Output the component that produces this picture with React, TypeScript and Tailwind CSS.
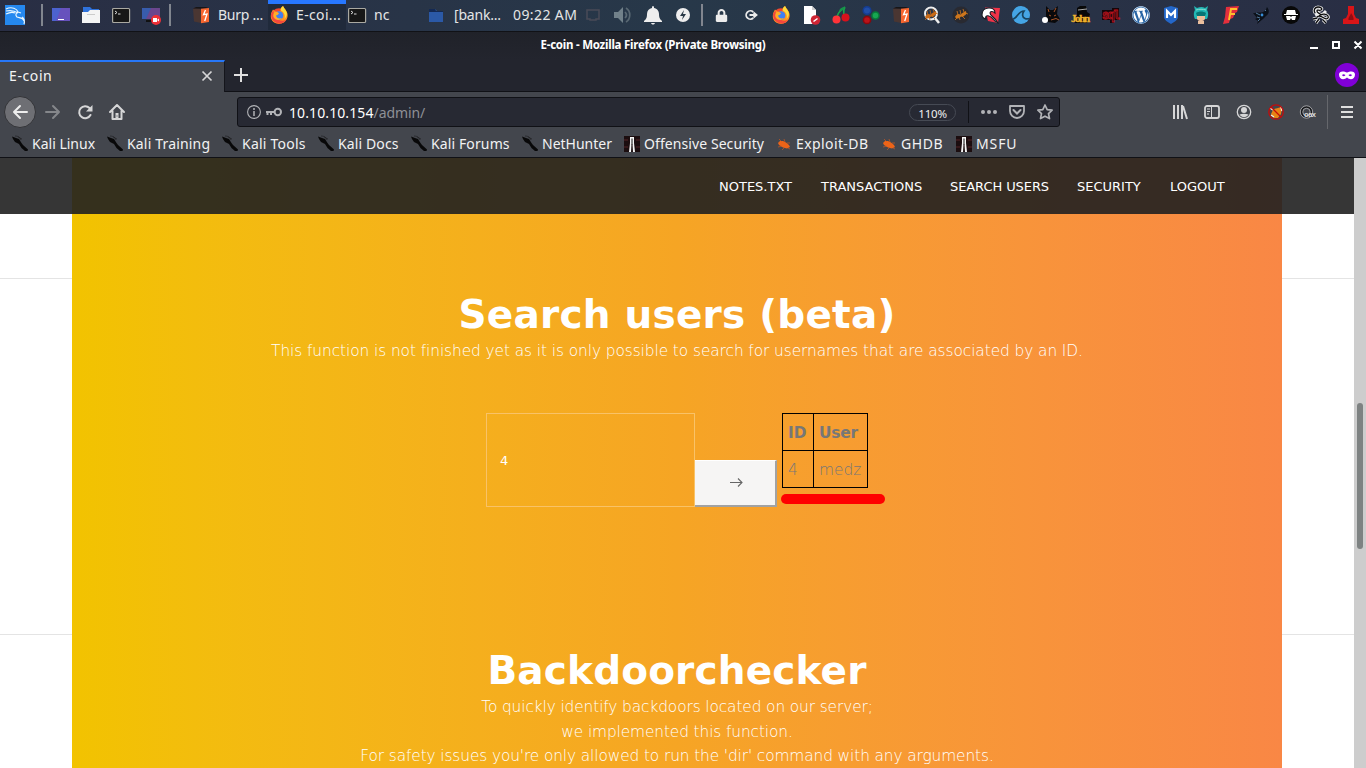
import React from "react";
import { FaWordpress, FaLock } from "react-icons/fa";

type P = { children?: React.ReactNode; s?: number; v?: string };
const Svg = ({ children, s = 18, v = "0 0 18 18" }: P) => (
  <svg width={s} height={s} viewBox={v} fill="none" className="shrink-0 overflow-visible">{children}</svg>
);

const Firefox = ({ s = 18 }: { s?: number }) => (
  <Svg s={s}>
    <circle cx="9" cy="10" r="7.8" fill="#f5482f" />
    <path d="M3 3.500C.2 8-.2 12.500 3.500 16c3 2.300 8 2.200 11 0 3.500-3 4.200-8 1.500-11.500C15.800 3 14 2.500 13 0c-2 1.300-3 3-2.500 5L6 6Z" fill="#ff9420" />
    <path d="M13 0c-2 1.500-2.500 3-2 4.500 3 2 4.500 4.500 3.500 8.500 4-4 2-8 .8-9C15 3 14 2 13 0Z" fill="#ffdc3a" />
    <path d="M1 8c0 6 4 9.500 8.500 9.500 3 0 6-2 7-4-2.500 1.500-5 1.500-7.500.5L4 10 3.500 4Z" fill="#f4473d" />
    <circle cx="9" cy="9.500" r="4.300" fill="#3f7ff2" />
    <path d="M5 6c1.500-.5 3 0 4 1.500L7.500 9 6 9.500C6.500 12 9 13 12 12c-2 3-7 2.300-8.500-1C2.800 9.500 3.500 7 5 6Z" fill="#ffad29" />
  </Svg>
);
const Burp = () => (
  <Svg>
    <path d="M1 3 4 1h9l3 1.500H9V17l-7-1.500Z" fill="#4a3632" />
    <path d="M1 2.500 4 1h10l3 1.300-8 .5Z" fill="#171518" />
    <path d="M9 2.800 17 2v14l-8 1.200Z" fill="#f7662f" />
    <path d="m13.500 4-2 4.700 3.500-.7-2.300 7" stroke="#fff" strokeWidth="1.300" />
  </Svg>
);
const Terminal = () => (
  <Svg>
    <rect x=".6" y="2.500" width="17" height="14" rx="1" fill="#171717" stroke="#aaa9a2" strokeWidth="1.200" />
    <path d="m3 5 2 1.500-2 1.500M6 8h2.500" stroke="#ddd" />
  </Svg>
);
const Ant = ({ c = "#cf771c" }: { c?: string }) => (
  <>
    <path d="M3 11c1.500-3 4-4 5.500-2 1-2 3.500-2.500 5-4 1.500 1 1 4-1 4.500-1 1.500-2.500 1.500-3.500 1-1.500 2-4 3-6 .5Z" fill={c} />
    <path d="m5 12-2 2m4-3 1 3m2-4 3 3M6 9 5 5m4 4-1-5m4 2-1-3m2 4 3 1" stroke={c} strokeWidth=".8" />
  </>
);

const tray: React.ReactNode[] = [
  <FaLock size={13} color="#ececec" />,
  <Svg><path d="M11.300 6A4.200 4.200 0 1 0 11.300 12M7.500 9H14m-2.500-2.500L14.500 9 11.500 11.500" stroke="#ececec" strokeWidth="1.800" /></Svg>,
  <Firefox />,
  <Svg><path d="M2 0h8l4 4v14H2Z" fill="#fff" /><path d="M10 0v4h4" fill="#cfcfcf" /><circle cx="13.500" cy="14" r="4.800" fill="#cf2534" /><path d="m11.500 15.500 4-3" stroke="#fff" strokeWidth="1.500" /></Svg>,
  <Svg><path d="M5 11C6 6 9 4 13 1M13 1c-2.500 4-1 6-1 9" stroke="#18a34b" strokeWidth="1.600" /><path d="M7 5c1-3 3-4 6-4-1 3-3 4-6 4Z" fill="#17934a" /><circle cx="4.500" cy="13.500" r="4" fill="#ff3338" /><circle cx="13.500" cy="11.500" r="4" fill="#d8111c" /></Svg>,
  <Svg><circle cx="5" cy="4.500" r="3.800" fill="#214ea7" stroke="#153d91" strokeWidth="1.500" /><circle cx="13.500" cy="9.500" r="3.500" fill="#18a652" stroke="#087b3a" strokeWidth="1.500" /><circle cx="5" cy="14" r="3.600" fill="#bb1319" stroke="#89080e" strokeWidth="1.500" /></Svg>,
  <Burp />,
  <Svg><circle cx="9" cy="7.500" r="6" stroke="#eee" strokeWidth="2" /><path d="m13 12 4 5" stroke="#eee" strokeWidth="2.500" /><Ant c="#c96a15" /></Svg>,
  <Svg><circle cx="9" cy="9" r="8.500" fill="#292a31" /><Ant /></Svg>,
  <Svg><path d="M3 1.500 18 2l-2 15-10-2Z" fill="#ef3348" /><path d="M0 9C0 4 3 2 7 2c4 0 6 2 6 5-2-2-5-2-5 0 0 3 5 4 8 10-4-1-5-6-9-7-3-1-4 1-3 3-2 0-4-2-4-4Z" fill="#fff" stroke="#181a22" strokeWidth="1.100" /></Svg>,
  <Svg><circle cx="9" cy="9" r="9" fill="#45a5e5" /><path d="M1 13c4 0 5-8 11-8-2 3-2 6 1 7.500 1 .5 3 .5 4.500 0" stroke="#18445f" strokeWidth="1.700" /></Svg>,
  <Svg><path d="m4 0 4 4h3l5-4-1 8 3 5-5 4-7-1-2-6Z" fill="#09090b" /><circle cx="3" cy="14" r="3" fill="#fff" /><path d="m6 3 1 3m7-4-2 4M7 9l2 1m3 0 2-1M9 14l5-1.500 3 1.500" stroke="#a95428" /></Svg>,
  <Svg s={20} v="-1 0 20 18"><path d="M5 2 8 0h6l1 6 3 2-3 9H3l2-9Z" fill="#080808" /><path d="m6 4 9-1" stroke="#a9a9a9" /><text x="-1" y="16" fontFamily="Liberation Serif" fontWeight="bold" fontSize="11" fill="#f1b42c" stroke="#f1b42c" strokeWidth=".3" textLength="19">John</text></Svg>,
  <Svg><path d="M0 4h10V2h7v12h-5v3H8v-3H0Z" fill="#150609" /><text x="0" y="13" fontFamily="Liberation Mono" fontWeight="bold" fontSize="12" fill="#171014" stroke="#bd101b" strokeWidth=".8" textLength="18">sql</text></Svg>,
  <span className="grid h-[18px] w-[18px] place-items-center rounded-full bg-[#2865a5]"><FaWordpress size={18} color="#fff" /></span>,
  <Svg><path d="m9 0 7 2v9c0 3-4 5-7 7-3-2-7-4-7-7V2Z" fill="#2467c9" /><path d="M5 12V5l4 4 4-4v7" stroke="#fff" strokeWidth="2.200" /></Svg>,
  <Svg><path d="M2 0 5 2c3-1.500 6-1.500 8 0l3-2-1 4c2 3 1 7 0 9H3C2 11 1 7 3 4Z" fill="#23b6b3" /><path d="M5 8h8v5c-2 3-6 3-8 0Z" fill="#edbd9a" /><path d="M4 7c3-2 7-2 10 0l-1 3H5Z" fill="#087574" /><path d="M6 15h6v3H6Z" fill="#ebc09e" /><path d="M4 4c3-1 7-1 10 0" stroke="#86ded2" /></Svg>,
  <Svg><path d="M4 1 17 0l-2 6-2 1-2 5-3 1-1 4-6 1 2-7Z" fill="#e42f3c" /><path d="M7 14 9 3h6M8 8h5" stroke="#ffc12e" strokeWidth="2" /></Svg>,
  <Svg><path d="M3 7c3-1 6 0 8-1 3-1 3-3 4-5 3 4 2 7-1 9l-3 3-6 5 1-3-3-2 2-1-4-5Z" fill="#0c1119" /><path d="m4 7 4 2m-3 2 3 1m5-7 1-1M6 15l2-2" stroke="#5f93bd" strokeWidth=".8" /><circle cx="10" cy="9" r="1.400" fill="#388dd6" /></Svg>,
  <Svg><circle cx="9" cy="9" r="9" fill="#080808" /><path d="M5 4h8l1 4H4ZM2 8h14v1H2ZM4 10h4l1 1 1-1h4l-1 4h-3l-1-2-1 2H5Z" fill="#fff" /></Svg>,
  <Svg><path d="M3 7C1 4 3 1 6 1s5 2 3 3-4-1-4 1 3 3 5 4M7 10c3-3 8-2 9 0s-1 4-4 2-5-3-7-1M5 12l-4 1m6 0-3 4m7-3 3 3M7 7 3 9m8-1 3-3" stroke="#eee" strokeWidth="3" /><path d="M3 7C1 4 3 1 6 1s5 2 3 3-4-1-4 1 3 3 5 4M7 10c3-3 8-2 9 0s-1 4-4 2-5-3-7-1M5 12l-4 1m6 0-3 4m7-3 3 3" stroke="#0c0c0d" strokeWidth="1.300" /></Svg>,
  <Svg><path d="M6 0h6v8l2 4 3 1v5H1v-5l3-1 2-4Z" fill="#d91518" /><path d="M6.500 14C6 11 9 9 9 7c2 3 3 5 2.500 7Z" fill="#8d0d13" /></Svg>,
];

const Divider = () => <div className="h-[22px] w-0.5 bg-[#81868f]" />;
const Cell = ({ children, className = "" }: { children: React.ReactNode; className?: string }) => (
  <div className={"flex w-[30px] shrink-0 items-center justify-center " + className}>{children}</div>
);

function Taskbar() {
  return (
    <header className="flex h-[31px] shrink-0 items-center bg-linear-to-r from-[#292e44] via-[#273849] to-[#292e44] pb-px text-[14px] whitespace-nowrap text-[#e4e5e6]">
      <Cell>
        <Svg s={20} v="0 0 20 20"><path d="M0 0h20v20H0Z" fill="#2588f0" /><path d="M1 4c6-3 11 0 12 3-2 1-3 3-1 5 2 1 6 0 7 4m-6-9 3 1M1 6c5-1 9 0 12 2M1 9c4-2 7-2 9-1M17 12c2 1 3 4 2 7" stroke="#e9f6ff" strokeWidth="1.200" /></Svg>
      </Cell>
      <div className="ml-[11px]"><Divider /></div>
      <Cell className="ml-[3px]"><Svg><path d="M0 2h18v13H0Z" fill="#4c62ce" /><path d="M9 2h9v13H4Z" fill="#6752bd" /><path d="M6 13.500h6" stroke="#fff" /></Svg></Cell>
      <Cell><Svg><path d="M1 1h7l2 2h7v7H1Z" fill="#2f72db" /><path d="M0 6h6l2-2h10v13H0Z" fill="#f4f4f4" /><path d="M5 8.500h8" stroke="#ccc" /></Svg></Cell>
      <Cell><Terminal /></Cell>
      <Cell><Svg><path d="M0 2h17v11H0Z" fill="#385cad" /><path d="M9 2h9v11H4Z" fill="#6b468e" /><path d="M4 15h7" stroke="#111" strokeWidth="2" /><circle cx="14" cy="14" r="5" fill="#ef3036" /><path d="M11 12h4v4h-4Zm4 2 2-1.500v3Z" fill="#fff" /></Svg></Cell>
      <div className="ml-[3px]"><Divider /></div>
      <Cell className="ml-[15px]"><Burp /></Cell>
      <span className="-mt-0.5 ml-0.5 w-[50px] tracking-[-0.25px]">Burp ...</span>
      <div className="flex h-[30px] w-[78px] items-center border-t-4 border-[#2777ff] bg-[#202a3b] pb-1">
        <span className="ml-0.5"><Firefox /></span><span className="-mt-0.5 ml-2 tracking-[0.35px]">E-coi...</span>
      </div>
      <Cell className="-ml-1"><Terminal /></Cell>
      <span className="-mt-0.5 ml-0.5 w-[47px]">nc</span>
      <Cell><Svg><path d="M2 3h6l2 2h6v11H2Z" fill="#2b59a6" /><path d="M2 3h6l1 2h7v1H2Z" fill="#142952" /></Svg></Cell>
      <span className="-mt-0.5 ml-[3px] w-[59px] tracking-[-0.2px]">[bank...</span>
      <span className="-mt-0.5 w-[65px] tracking-[0.4px]">09:22 AM</span>
      <Cell><Svg><path d="M3 4h12v9h-3v1H6v-1H3Z" stroke="#494b57" strokeWidth="1.500" /></Svg></Cell>
      <Cell><Svg><path d="M0 6h4l5-5v16l-5-5H0Z" fill="#71818a" /><path d="M11 6c2 2 2 4 0 6m1-10c5 3 5 11 0 14" stroke="#596873" strokeWidth="1.700" /></Svg></Cell>
      <Cell><Svg><path d="M9 0c1 0 1 1 1 2 3 .5 5 3 5 6 0 4 1 5 3 7v1H0v-1c2-2 3-3 3-7 0-3 2-5.500 5-6 0-1 0-2 1-2ZM7 17h4c-1 2-3 2-4 0Z" fill="#eee" /></Svg></Cell>
      <Cell><Svg><circle cx="9" cy="9" r="7" fill="#eee" /><path d="m10 4-4 6h3l-1 4 4-6H9Z" fill="#293846" /></Svg></Cell>
      <div className="mr-[3px] ml-[3px]"><Divider /></div>
      {tray.map((icon, i) => <Cell key={i}>{icon}</Cell>)}
    </header>
  );
}

const KaliMark = () => (
  <Svg s={16} v="0 0 16 16"><path d="M0 .5 4 2l3 1 2.500 4L11 9l5 4.500-.5 1.500L13 15 9.500 12 7 8 3 6 1 3Z" fill="#080809" /><path d="M3 0c3 0 5 1 6 4M6 1l4 2" stroke="#1c1d1f" strokeWidth=".6" /></Svg>
);
const OffsecMark = () => (
  <Svg s={16} v="0 0 16 16"><path d="M0 0h16v16H0Z" fill="#1b0d0f" /><path d="M0 4h4m8 0h4M0 11h4m8 0h4" stroke="#552428" /><path d="M6 1h4v6l1 9H9L8.500 8h-1L7 16H5l1-9Z" fill="#f5f5f5" /><path d="M8 2.500v6" stroke="#111" /></Svg>
);
const DbMark = () => (
  <Svg s={16} v="0 0 16 16"><path d="m2 7 2-2 3 0 3 1.500 3 2.500 1 2-3 1.500-4-1L3 9Z" fill="#ed6418" /><path d="m3 3 3 3m2-3 1 3m2 1 3 0M2 11l4-1m0 4 2-2m4 0 2 1" stroke="#dd5c1d" strokeWidth=".6" /></Svg>
);

const bookmarks = [
  { t: "Kali Linux", w: "w-[95px]", i: <KaliMark /> },
  { t: "Kali Training", w: "w-[115px] tracking-[0.17px]", i: <KaliMark /> },
  { t: "Kali Tools", w: "w-[96px] tracking-[0.22px]", i: <KaliMark /> },
  { t: "Kali Docs", w: "w-[93px] tracking-[0.12px]", i: <KaliMark /> },
  { t: "Kali Forums", w: "w-[111px] tracking-[0.12px]", i: <KaliMark /> },
  { t: "NetHunter", w: "w-[102px]", i: <KaliMark /> },
  { t: "Offensive Security", w: "w-[152px] tracking-[0.08px]", i: <OffsecMark /> },
  { t: "Exploit-DB", w: "w-[105px] tracking-[0.4px]", i: <DbMark /> },
  { t: "GHDB", w: "w-[75px] tracking-[0.6px]", i: <DbMark /> },
  { t: "MSFU", w: "w-[70px] tracking-[0.9px]", i: <OffsecMark /> },
];

function Browser() {
  return (
    <div className="flex h-[127px] shrink-0 flex-col bg-[#23252e] whitespace-nowrap">
      <div className="flex h-[29px] shrink-0 items-center border-t border-[#111216] bg-linear-to-b from-[#202229] to-[#23252e] pb-px">
        <div className="w-[1306px] pb-0.5 text-center text-[11.500px] leading-none font-bold tracking-[-0.24px] text-white">E-coin - Mozilla Firefox (Private Browsing)</div>
        <svg width="54" height="10" viewBox="0 0 54 10" fill="none" stroke="#fff" strokeWidth="2" className="-mt-0.5 overflow-visible"><path d="M4 8h8M27 2h6v6h-6ZM48.500 1.500l7 7m0-7-7 7" /></svg>
      </div>
      <div className="flex h-[32px] shrink-0 items-stretch border-b border-[#101116]">
        <div className="-mb-px flex w-[225px] items-center border-t-2 border-r border-t-[#2777f8] border-r-[#14151b] bg-[#43464d] pb-0.5 pl-[9px] text-[14px] text-[#f4f4f5]">
          <span className="-mt-0.5 w-[192px] tracking-[0.6px]">E-coin</span>
          <svg width="12" height="12" viewBox="0 0 12 12" stroke="#d6d6d7" strokeWidth="1.700"><path d="m1.500 1.500 9 9m0-9-9 9" /></svg>
        </div>
        <div className="flex flex-1 items-center justify-between pr-[7px] pb-px pl-[9px]">
          <svg width="14" height="14" viewBox="0 0 14 14" stroke="#e0e0e0" strokeWidth="2"><path d="M7 0v14M0 7h14" /></svg>
          <svg width="24" height="24" viewBox="0 0 24 24"><circle cx="12" cy="12" r="12" fill="#8000d7" /><path fillRule="evenodd" d="M4 11.500c0-4 5-3.500 8-2 3-1.500 8-2 8 2 0 5-5 6-8 3-3 3-8 2-8-3Zm3 .8c1.500 1.300 3 1 3.500-.3-1.500-1.300-3-1-3.500.3Zm6.500-.3c.5 1.300 2 1.600 3.500.3-.5-1.300-2-1.600-3.500-.3Z" fill="#fff" /></svg>
        </div>
      </div>
      <div className="flex h-[40px] shrink-0 items-center bg-[#43464d]">
        <div className="ml-1 grid h-8 w-8 place-items-center rounded-full border border-[#333438] bg-[#6e6f74]"><Svg s={16} v="0 0 16 16"><path d="M15 8H2m6-6L2 8l6 6" stroke="#eee" strokeWidth="2" strokeLinecap="round" strokeLinejoin="round" /></Svg></div>
        <div className="ml-[9px]"><Svg s={16} v="0 0 16 16"><path d="M1 8h13M8 2l6 6-6 6" stroke="#85878b" strokeWidth="2" strokeLinecap="round" strokeLinejoin="round" /></Svg></div>
        <div className="ml-4"><Svg s={16} v="0 0 16 16"><path d="M13.500 11A6 6 0 1 1 12.500 4" stroke="#d6d6d7" strokeWidth="2" strokeLinecap="round" /><path d="M15.500 1v6.500H9Z" fill="#d6d6d7" /></Svg></div>
        <div className="ml-4"><Svg s={16} v="0 0 16 16"><path d="m1 8 7-7 7 7M3.500 7v8h9V7" stroke="#d6d6d7" strokeWidth="2" strokeLinecap="round" strokeLinejoin="round" /><path d="M6.500 9h3v6h-3Z" fill="#d6d6d7" /><path d="M8 11.500v1" stroke="#43464d" /></Svg></div>
        <div className="ml-[112px] flex h-[30px] w-[823px] shrink-0 items-center rounded-[3px] border border-[#101116] bg-[#272933] pl-[9px]">
          <Svg s={14} v="0 0 14 14"><circle cx="7" cy="7" r="6.400" stroke="#b2b3b7" strokeWidth="1.100" /><path d="M7 3v2m0 1v5" stroke="#b2b3b7" strokeWidth="1.500" /></Svg>
          <svg className="ml-[5px]" width="16" height="10" viewBox="0 0 16 10" fill="none" stroke="#b2b3b7" strokeWidth="2"><circle cx="11.800" cy="5" r="3.200" /><path d="M9 5H0M1.500 5v3M5 5v3" /></svg>
          <span className="ml-[7px] w-[620px] text-[14px] text-[#8e9096]"><span className="tracking-[0.1px] text-white">10.10.10.154</span><span className="tracking-[-0.1px]">/admin/</span></span>
          <span className="grid h-[17px] w-[47px] place-items-center rounded-full border border-[#464a54] text-[11.500px] tracking-[-0.2px] text-[#f0f0f1]">110%</span>
          <span className="ml-3 h-[22px] w-px bg-[#101116]" />
          <svg className="ml-3" width="16" height="16" viewBox="0 0 16 16" fill="#b2b3b7"><circle cx="2" cy="8" r="2" /><circle cx="8" cy="8" r="2" /><circle cx="14" cy="8" r="2" /></svg>
          <svg className="ml-3" width="16" height="16" viewBox="0 0 16 16" fill="none" stroke="#b2b3b7" strokeWidth="1.800"><path d="M1 2h14v5a7 7 0 0 1-14 0Z" strokeLinejoin="round" /><path d="m4.500 6 3.500 3.500L11.500 6" strokeWidth="2" strokeLinecap="round" /></svg>
          <svg className="ml-3" width="16" height="16" viewBox="0 0 16 16" fill="none" stroke="#b2b3b7" strokeWidth="1.700" strokeLinejoin="round"><path d="m8 1 2.200 4.600 4.900.6-3.600 3.400 1 5L8 12.200l-4.500 2.400 1-5L.9 6.200l4.900-.6Z" /></svg>
        </div>
        <div className="ml-[112px] flex items-center gap-4">
          <Svg s={16} v="0 0 16 16"><path d="M2 1v14M6 1v14M10 1v14M11 2l4 13" stroke="#d6d6d7" strokeWidth="2" /></Svg>
          <Svg s={16} v="0 0 16 16"><rect x="1" y="2" width="14" height="12" rx="2" stroke="#d6d6d7" strokeWidth="1.800" /><path d="M7.500 2v12M3 5h3M3 7.500h3M3 10h2" stroke="#d6d6d7" /></Svg>
          <Svg s={16} v="0 0 16 16"><circle cx="8" cy="8" r="6.700" stroke="#d6d6d7" strokeWidth="1.300" /><circle cx="8" cy="6" r="3" fill="#d6d6d7" /><path d="M3.500 10.500C6 9.500 10 9.500 12.500 10.500 10 14 6 14 3.500 10.500Z" fill="#d6d6d7" /></Svg>
          <Svg s={16} v="0 0 16 16"><path d="M5 6c2-2 6-2 9-3l-1 7-3 4H6l-3-4Z" fill="#e88414" /><path d="M2 4l3 2m8-3 1 4M3 11l3 2" stroke="#f2eee1" strokeWidth="1.500" /><circle cx="8" cy="8" r="7.200" stroke="#c50b0b" strokeWidth="1.300" /><path d="m3 3 10 10" stroke="#c50b0b" strokeWidth="1.300" /></Svg>
          <Svg s={16} v="0 0 16 16"><circle cx="6.500" cy="8" r="5" stroke="#17181b" strokeWidth="2" /><circle cx="6.500" cy="8" r="6.200" stroke="#b9b9bb" strokeWidth=".8" /><circle cx="6.500" cy="8" r="3.700" stroke="#b9b9bb" strokeWidth=".8" /><text x="4" y="12.500" fontFamily="Liberation Sans" fontSize="7.500" fontWeight="bold" fill="#ddd" textLength="12">oax</text></Svg>
        </div>
        <div className="ml-[11px] h-[34px] w-px bg-[#65676c]" />
        <svg className="ml-[13px]" width="12" height="12" viewBox="0 0 12 12" stroke="#dedede" strokeWidth="2"><path d="M0 1h12M0 6h12M0 11h12" /></svg>
      </div>
      <div className="flex h-[26px] shrink-0 items-center border-b border-[#101116] bg-[#43464d] pb-px pl-3 text-[14px] text-[#f2f2f3]">
        {bookmarks.map((b) => <div key={b.t} className={"flex shrink-0 items-center gap-1 " + b.w}>{b.i}<span className="-mt-0.5">{b.t}</span></div>)}
      </div>
    </div>
  );
}

const Side = () => (
  <div className="flex flex-col">
    <div className="h-[56px] bg-[#363636]" />
    <div className="h-[65px] border-b border-[#e4e4e4]" />
    <div className="h-[356px] border-b border-[#e4e4e4]" />
  </div>
);

function Page() {
  return (
    <main className="flex min-h-0 flex-1 font-['DejaVu_Sans',sans-serif]">
      <div className="grid min-h-0 flex-1 grid-cols-[72px_1210px_72px] bg-white">
        <Side />
        <section className="flex flex-col bg-linear-to-r from-[#f2c300] via-[#f6a524] to-[#f98745] text-center text-white">
          <nav className="flex h-[56px] shrink-0 items-center bg-[#202020]/90 pt-0.5 pl-[647px] text-[13px] whitespace-nowrap text-white">
            <span className="w-[102px] text-left">NOTES.TXT</span>
            <span className="w-[129px] text-left">TRANSACTIONS</span>
            <span className="w-[127px] text-left tracking-[-0.08px]">SEARCH USERS</span>
            <span className="w-[93px] text-left">SECURITY</span>
            <span className="text-left">LOGOUT</span>
          </nav>
          <h1 className="mt-[78px] text-[39px] leading-[46px] font-bold tracking-[0.22px]">Search users (beta)</h1>
          <p className="mt-px text-[15.400px] leading-[25px] font-extralight tracking-[-0.085px]">This function is not finished yet as it is only possible to search for usernames that are associated by an ID.</p>
          <div className="mt-[49px] flex h-[94px] pl-[414px] text-left">
            <div className="flex h-[94px] w-[209px] items-center border border-[#f9c267] pt-0.5 pl-[13px] text-[13px]">4</div>
            <div className="grid h-[47px] w-[82px] place-items-center self-end border-t border-r-2 border-b-2 border-t-white border-r-[#a2a2a2] border-b-[#a2a2a2] bg-[#f6f5f4] pl-0.5">
              <svg width="13" height="10" viewBox="0 0 13 10" fill="none" stroke="#666" strokeWidth="1.100"><path d="M0 4.500h12M8 .5l4 4-4 4" /></svg>
            </div>
            <div className="ml-[5px] flex flex-col">
              <table className="h-[75px] w-[86px] border-collapse text-[15.400px] leading-[22px] text-[#777]">
                <tbody>
                  <tr><th className="w-[31px] border border-black pt-px pl-[5px] text-left">ID</th><th className="border border-black pt-px pl-[5px] text-left tracking-[-0.2px]">User</th></tr>
                  <tr><td className="border border-black pt-px pl-[5px] font-extralight">4</td><td className="border border-black pt-px pl-[5px] font-extralight">medz</td></tr>
                </tbody>
              </table>
              <div className="mt-1.5 -ml-px h-[10px] w-[104px] rounded-full bg-[#f00]" />
            </div>
          </div>
          <h1 className="mt-[141px] text-[39px] leading-[46px] font-bold tracking-[0.15px]">Backdoorchecker</h1>
          <p className="mt-px text-[15.400px] leading-[24.600px] font-extralight tracking-[-0.12px]">To quickly identify backdoors located on our server;<br />we implemented this function.<br />For safety issues you're only allowed to run the 'dir' command with any arguments.</p>
        </section>
        <Side />
      </div>
      <aside className="flex w-3 flex-col bg-[#cdcdcd] pt-[245px]"><div className="mx-auto h-[146px] w-1.5 rounded-full bg-[#7e8282]" /></aside>
    </main>
  );
}

export default function App() {
  return (
    <div className="flex h-[768px] w-[1366px] flex-col overflow-hidden font-['Noto_Sans',sans-serif]">
      <Taskbar />
      <Browser />
      <Page />
    </div>
  );
}
